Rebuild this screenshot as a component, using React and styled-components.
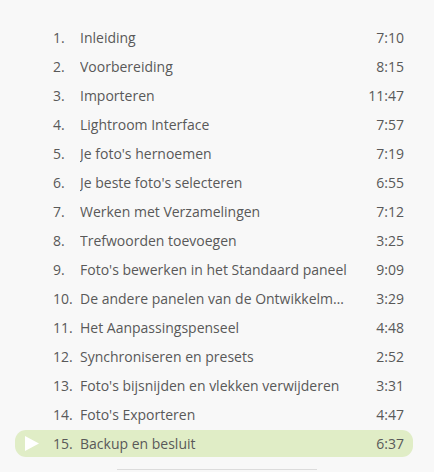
import React from "react";
import styled, { createGlobalStyle } from "styled-components";

const GlobalStyle = createGlobalStyle`
  html, body {
    margin: 0;
    padding: 0;
    background: #f8f8f8;
  }
  body {
    font-family: "Open Sans", "Noto Sans", sans-serif;
    -webkit-font-smoothing: antialiased;
  }
`;

const Page = styled.div`
  width: 434px;
  height: 472px;
  box-sizing: border-box;
  padding: 24px 21px 0 15px;
  display: flex;
  flex-direction: column;
  overflow: hidden;
`;

const List = styled.ol`
  list-style: none;
  margin: 0;
  padding: 0;
  display: flex;
  flex-direction: column;
  gap: 2px;
`;

const Row = styled.li`
  display: grid;
  grid-template-columns: 38px 27px 1fr 48px;
  align-items: center;
  height: 27px;
  padding-right: 9px;
  border-radius: 11px;
  background: ${(p) => (p.$active ? "#e0edc6" : "transparent")};
  color: #595959;
  font-size: 14px;
  line-height: 27px;
`;

const IconCell = styled.span`
  display: flex;
  align-items: center;
  padding-left: 10px;
  height: 100%;
`;

const Num = styled.span`
  white-space: nowrap;
`;

const Title = styled.span`
  white-space: nowrap;
  overflow: hidden;
  text-overflow: ellipsis;
`;

const Duration = styled.span`
  text-align: right;
  white-space: nowrap;
`;

const Divider = styled.div`
  align-self: center;
  width: 200px;
  height: 1px;
  margin: 12px 0 0 6px;
  background: #dcdcdc;
`;

const PlayIcon = () => (
  <svg width="14" height="15" viewBox="0 0 14 15">
    <path d="M0 0 L14 7.5 L0 15 Z" fill="#ffffff" />
  </svg>
);

const items = [
  ["Inleiding", "7:10"],
  ["Voorbereiding", "8:15"],
  ["Importeren", "11:47"],
  ["Lightroom Interface", "7:57"],
  ["Je foto's hernoemen", "7:19"],
  ["Je beste foto's selecteren", "6:55"],
  ["Werken met Verzamelingen", "7:12"],
  ["Trefwoorden toevoegen", "3:25"],
  ["Foto's bewerken in het Standaard paneel", "9:09"],
  ["De andere panelen van de Ontwikkelm…", "3:29"],
  ["Het Aanpassingspenseel", "4:48"],
  ["Synchroniseren en presets", "2:52"],
  ["Foto's bijsnijden en vlekken verwijderen", "3:31"],
  ["Foto's Exporteren", "4:47"],
  ["Backup en besluit", "6:37"],
];

export default function App() {
  return (
    <>
      <GlobalStyle />
      <Page>
        <List>
          {items.map(([title, dur], i) => {
            const active = i === items.length - 1;
            return (
              <Row key={i} $active={active}>
                <IconCell>{active && <PlayIcon />}</IconCell>
                <Num>{i + 1}.</Num>
                <Title>{title}</Title>
                <Duration>{dur}</Duration>
              </Row>
            );
          })}
        </List>
        <Divider />
      </Page>
    </>
  );
}
